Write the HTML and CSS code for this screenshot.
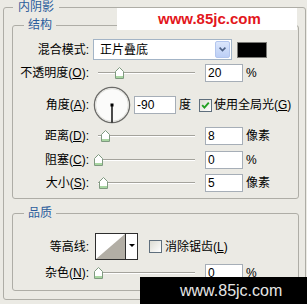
FILE: index.html
```html
<!DOCTYPE html>
<html lang="zh-CN">

<head>
    <meta charset="UTF-8">
    <title>内阴影</title>
    <link rel="stylesheet" href="styles.css">
</head>

<body>

    <fieldset class="group outer">
        <legend>内阴影</legend>

        <!-- 结构 -->
        <fieldset class="group section structure">
            <legend>结构</legend>

            <div class="row row-blend">
                <span class="lbl">混合模式:</span>
                <div class="select">
                    <span>正片叠底</span>
                    <span class="select-btn">
                        <svg width="7" height="5" viewBox="0 0 7 5"><path d="M0.6 0.6L3.5 3.6L6.4 0.6" fill="none" stroke="#4d6185" stroke-width="1.6"/></svg>
                    </span>
                </div>
                <span class="swatch"></span>
            </div>

            <div class="row row-opacity">
                <span class="lbl">不透明度(<u>O</u>):</span>
                <div class="slider">
                    <span class="track"></span>
                    <svg class="thumb" style="left: 22px" width="9" height="12" viewBox="0 0 9 12"><path d="M0.5 11.5V4.5L4.5 0.5L8.5 4.5V11.5Z" fill="#fff" stroke="#7f9a80"/><path d="M1 9h7v2H1z" fill="#a9d6a2"/></svg>
                </div>
                <span class="num">20</span>
                <span class="unit">%</span>
            </div>

            <div class="row row-angle">
                <span class="lbl">角度(<u>A</u>):</span>
                <svg class="dial" width="38" height="38" viewBox="0 0 38 38">
                    <circle cx="19" cy="19" r="17.6" fill="#fbfbfa" stroke="#6b6b68" stroke-width="1.3"/>
                    <circle cx="19" cy="19" r="16.4" fill="none" stroke="#d8d8d2" stroke-width="0.8"/>
                    <line x1="19" y1="19" x2="19" y2="36.5" stroke="#000" stroke-width="1.4"/>
                    <rect x="17.5" y="17.5" width="3" height="3" fill="#000"/>
                </svg>
                <span class="num num-wide">-90</span>
                <span class="unit">度</span>
                <span class="check checked">
                    <svg width="11" height="11" viewBox="0 0 11 11"><path d="M2.2 5.2L4.4 7.6L8.8 2.6" fill="none" stroke="#22a022" stroke-width="1.9"/></svg>
                </span>
                <span class="check-text">使用全局光(<u>G</u>)</span>
            </div>

            <div class="row row-distance">
                <span class="lbl">距离(<u>D</u>):</span>
                <div class="slider">
                    <span class="track"></span>
                    <svg class="thumb" style="left: 8px" width="9" height="12" viewBox="0 0 9 12"><path d="M0.5 11.5V4.5L4.5 0.5L8.5 4.5V11.5Z" fill="#fff" stroke="#7f9a80"/><path d="M1 9h7v2H1z" fill="#a9d6a2"/></svg>
                </div>
                <span class="num">8</span>
                <span class="unit">像素</span>
            </div>

            <div class="row row-choke">
                <span class="lbl">阻塞(<u>C</u>):</span>
                <div class="slider">
                    <span class="track"></span>
                    <svg class="thumb" style="left: 1px" width="9" height="12" viewBox="0 0 9 12"><path d="M0.5 11.5V4.5L4.5 0.5L8.5 4.5V11.5Z" fill="#fff" stroke="#7f9a80"/><path d="M1 9h7v2H1z" fill="#a9d6a2"/></svg>
                </div>
                <span class="num">0</span>
                <span class="unit">%</span>
            </div>

            <div class="row row-size">
                <span class="lbl">大小(<u>S</u>):</span>
                <div class="slider">
                    <span class="track"></span>
                    <svg class="thumb" style="left: 6px" width="9" height="12" viewBox="0 0 9 12"><path d="M0.5 11.5V4.5L4.5 0.5L8.5 4.5V11.5Z" fill="#fff" stroke="#7f9a80"/><path d="M1 9h7v2H1z" fill="#a9d6a2"/></svg>
                </div>
                <span class="num">5</span>
                <span class="unit">像素</span>
            </div>
        </fieldset>

        <!-- 品质 -->
        <fieldset class="group section quality">
            <legend>品质</legend>

            <div class="row row-contour">
                <span class="lbl">等高线:</span>
                <div class="contour">
                    <svg class="contour-preview" width="30" height="25" viewBox="0 0 30 25" preserveAspectRatio="none"><polygon points="0,25 30,0 30,25" fill="#b2aea5"/></svg>
                    <span class="contour-arrow"></span>
                </div>
                <span class="check"></span>
                <span class="check-text">消除锯齿(<u>L</u>)</span>
            </div>

            <div class="row row-noise">
                <span class="lbl">杂色(<u>N</u>):</span>
                <div class="slider">
                    <span class="track"></span>
                    <svg class="thumb" style="left: 1px" width="9" height="12" viewBox="0 0 9 12"><path d="M0.5 11.5V4.5L4.5 0.5L8.5 4.5V11.5Z" fill="#fff" stroke="#7f9a80"/><path d="M1 9h7v2H1z" fill="#a9d6a2"/></svg>
                </div>
                <span class="num">0</span>
                <span class="unit">%</span>
            </div>
        </fieldset>
    </fieldset>

    <!-- watermarks -->
    <div class="mark-top">www.85jc.com</div>
    <div class="mark-bottom">www.85jc.com</div>

</body>

</html>
```

FILE: styles.css
```css
/* Reset */
* {
    margin: 0;
    padding: 0;
    box-sizing: border-box;
}

body {
    position: relative;
    width: 307px;
    height: 304px;
    overflow: hidden;
    background-color: #ebeae4;
    font-family: "Liberation Sans", "Noto Sans CJK SC", sans-serif;
    font-size: 12px;
    color: #000;
}

u {
    text-decoration: underline;
    text-underline-offset: 1px;
}

/* Group boxes */
.group {
    border: 1px solid #aeada6;
    border-radius: 3px;
    min-inline-size: 0;
}

.group legend {
    font-size: 12px;
    line-height: 14px;
    color: #2b5d9c;
    padding: 0 4px;
    margin-left: 11px;
}

.outer {
    margin-left: 3px;
    width: 303px;
    padding: 4px 6px 8px 8px;
}

.outer > legend {
    padding: 0 5px;
    margin-left: 1px;
}

.structure {
    padding: 7px 0 6px;
}

.quality {
    margin-top: 7px;
    padding: 13px 0 8px;
}

/* Rows */
.row {
    display: flex;
    align-items: center;
    height: 18px;
    line-height: 14px;
}

.row-blend {
    height: 21px;
}

.row-opacity {
    margin-top: 4px;
}

.row-angle {
    height: 38px;
    margin-top: 4px;
}

.row-distance {
    margin-top: 3px;
}

.row-choke {
    margin-top: 6px;
}

.row-size {
    margin-top: 5px;
}

.row-contour {
    height: 27px;
}

.row-noise {
    margin-top: 4px;
}

.lbl {
    width: 76px;
    flex-shrink: 0;
    text-align: right;
    white-space: nowrap;
}

/* Select */
.select {
    display: flex;
    align-items: center;
    justify-content: space-between;
    width: 139px;
    height: 21px;
    margin-left: 4px;
    padding: 0 1px 0 6px;
    background-color: #fff;
    border: 1px solid #a3b4c6;
}

.select-btn {
    display: flex;
    align-items: center;
    justify-content: center;
    width: 15px;
    height: 17px;
    background: linear-gradient(#dbe6fc, #bccff5);
    border: 1px solid #b3c6ee;
    border-radius: 2px;
}

.swatch {
    width: 30px;
    height: 16px;
    margin-left: 5px;
    background-color: #000;
    border: 1px solid #7a7a76;
}

/* Slider */
.slider {
    position: relative;
    width: 104px;
    height: 18px;
    margin-left: 4px;
}

.track {
    position: absolute;
    left: 5px;
    right: 2px;
    top: 8px;
    height: 2px;
    border-top: 1px solid #a4a39c;
    border-bottom: 1px solid #fff;
}

.thumb {
    position: absolute;
    top: 3px;
}

/* Number fields */
.num {
    width: 38px;
    height: 18px;
    margin-left: 8px;
    padding-left: 2px;
    line-height: 16px;
    background-color: #fff;
    border: 1px solid #a6aeb7;
}

.num-wide {
    width: 42px;
    margin-left: 3px;
}

.unit {
    margin-left: 3px;
}

/* Angle dial */
.dial {
    margin-left: 4px;
}

/* Checkbox */
.check {
    display: flex;
    align-items: center;
    justify-content: center;
    width: 13px;
    height: 13px;
    margin-left: 8px;
    background: linear-gradient(135deg, #dcdcd3, #fff);
    border: 1px solid #5f6f7d;
}

.check-text {
    margin-left: 2px;
    white-space: nowrap;
}

/* Contour picker */
.contour {
    display: flex;
    height: 27px;
    margin-left: 6px;
    background-color: #fff;
    border: 1px solid #2e2e2e;
}

.contour-preview {
    width: 30px;
    height: 25px;
    border-right: 1px solid #2e2e2e;
}

.contour-arrow {
    position: relative;
    width: 11px;
}

.contour-arrow::after {
    content: "";
    position: absolute;
    left: 3px;
    top: 10px;
    border-left: 3px solid transparent;
    border-right: 3px solid transparent;
    border-top: 3px solid #000;
}

.row-contour .check {
    margin-left: 11px;
}

.row-contour .check-text {
    margin-left: 3px;
}

/* Watermarks */
.mark-top {
    position: absolute;
    left: 117px;
    top: 8px;
    width: 180px;
    height: 22px;
    padding-left: 41px;
    background-color: #fff;
    color: #e3161c;
    font: bold 15px/22px "Liberation Sans", sans-serif;
}

.mark-bottom {
    position: absolute;
    left: 140px;
    top: 277px;
    width: 167px;
    height: 27px;
    padding-left: 40px;
    background-color: #000;
    color: #e6e6e6;
    font: 16px/27px "Liberation Sans", sans-serif;
}
```
